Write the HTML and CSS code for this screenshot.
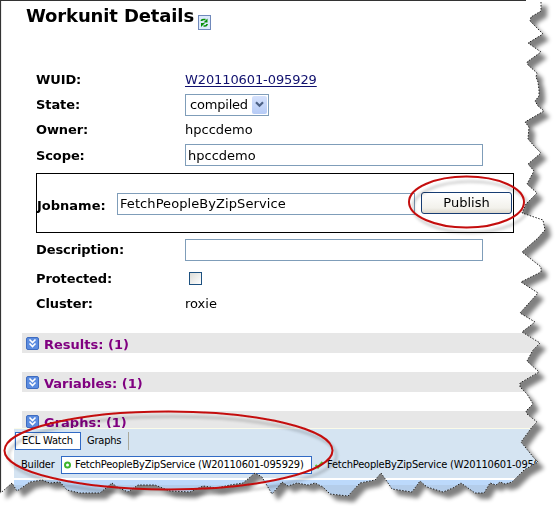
FILE: index.html
```
<!DOCTYPE html>
<html lang="en">
<head>
<meta charset="utf-8">
<title>Workunit Details</title>
<link rel="stylesheet" href="styles.css">
</head>
<body>
<div class="shadow">
<main class="sheet">
  <header class="title"><h1>Workunit Details</h1>
    <svg class="refresh" width="13" height="15" viewBox="0 0 13 15"><rect x=".5" y=".5" width="12" height="14" fill="#dce9fc" stroke="#7089bb"/><path d="M3.500 6V5.500Q4 4.500 6 4.500H7.500M9 9V9.500Q8.500 11 7 11H5.500" fill="none" stroke="#079007" stroke-width="1.700"/><path d="M9.500 3.500v4H5.500zM3 12V8H7z" fill="#079007"/></svg>
  </header>
  <section class="details">
    <div class="row wuid"><b>WUID:</b><a>W20110601-095929</a></div>
    <div class="row state"><b>State:</b><span class="select"><span>compiled</span><i><svg width="9" height="7" viewBox="0 0 9 7"><path d="M1 1.300L4.500 4.800L8 1.300" fill="none" stroke="#4d6185" stroke-width="2.200"/></svg></i></span></div>
    <div class="row owner"><b>Owner:</b><span>hpccdemo</span></div>
    <div class="row scope"><b>Scope:</b><span class="field">hpccdemo</span></div>
    <div class="job"><b>Jobname:</b><span class="field">FetchPeopleByZipService</span><span class="button">Publish</span></div>
    <div class="row description"><b>Description:</b><span class="field"></span></div>
    <div class="row protected"><b>Protected:</b><span class="check"></span></div>
    <div class="row cluster"><b>Cluster:</b><span>roxie</span></div>
  </section>
  <section class="groups">
    <h2><svg width="13" height="13" viewBox="0 0 13 13"><rect x=".5" y=".5" width="12" height="12" rx="1.500" fill="#5b8ce0" stroke="#3f6cc0"/><path d="M3.500 2.500l3 3l3-3M3.500 6.500l3 3l3-3" fill="none" stroke="#fff" stroke-width="1.600"/></svg>Results: (1)</h2>
    <h2><svg width="13" height="13" viewBox="0 0 13 13"><rect x=".5" y=".5" width="12" height="12" rx="1.500" fill="#5b8ce0" stroke="#3f6cc0"/><path d="M3.500 2.500l3 3l3-3M3.500 6.500l3 3l3-3" fill="none" stroke="#fff" stroke-width="1.600"/></svg>Variables: (1)</h2>
    <h2 class="cut"><svg width="13" height="13" viewBox="0 0 13 13"><rect x=".5" y=".5" width="12" height="12" rx="1.500" fill="#5b8ce0" stroke="#3f6cc0"/><path d="M3.500 2.500l3 3l3-3M3.500 6.500l3 3l3-3" fill="none" stroke="#fff" stroke-width="1.600"/></svg>Graphs: (1)</h2>
  </section>
  <footer class="panel">
    <div class="tabs"><span class="tab active">ECL Watch</span><span class="tab">Graphs</span></div>
    <div class="builders"><span class="label">Builder</span>
      <span class="item active"><svg width="7" height="8" viewBox="0 0 7 8"><circle cx="3.500" cy="4" r="2.500" fill="#fff" stroke="#3eb52c" stroke-width="2"/></svg><span class="name">FetchPeopleByZipService (W20110601-095929)</span></span>
      <span class="item"><svg width="8" height="8" viewBox="0 0 8 8"><path d="M.5 4l2.500 2.500L7.500 1" fill="none" stroke="#55c832" stroke-width="2.200"/></svg><span class="name">FetchPeopleByZipService (W20110601-095929)</span></span>
    </div>
    <div class="strip"><span></span><span></span></div>
  </footer>
</main>
</div>
<svg class="overlay" width="557" height="506" viewBox="0 0 557 506">
  <defs><filter id="soft" x="-10%" y="-20%" width="130%" height="150%"><feDropShadow dx="4" dy="5" stdDeviation="1.500" flood-color="#000" flood-opacity=".24"/></filter></defs>
  <path d="M.5 492V.5H526" fill="none" stroke="#333" stroke-width="1.200"/>
  <path id="edge" fill="none" stroke="#222" stroke-width="1" stroke-dasharray="1.500 1.500"/>
  <g fill="none" stroke="#c40d0d" stroke-width="2"><ellipse cx="466.500" cy="202" rx="57.500" ry="25.500" filter="url(#soft)"/><ellipse cx="168.500" cy="450.500" rx="164" ry="39" filter="url(#soft)"/></g>
</svg>
<script src="edge.js"></script>
</body>
</html>
```
FILE: styles.css
```
* { box-sizing: border-box; }
body { margin: 0; width: 557px; height: 506px; overflow: hidden; background: #fff; color: #000; font: 13px/16px "DejaVu Sans", sans-serif; position: relative; }
.shadow { filter: drop-shadow(6px 6px 2px #808080); }
.sheet { width: 557px; height: 506px; background: #fff; overflow: hidden; display: flex; flex-direction: column; }
.overlay { position: absolute; left: 0; top: 0; }
.title { height: 68px; flex: none; padding: 4px 0 0 26px; display: flex; align-items: flex-start; gap: 4px; }
h1 { margin: 0; font-size: 18px; line-height: 24px; width: 168px; white-space: nowrap; letter-spacing: -.13px; }
.refresh { margin-top: 11px; }
.details { height: 265px; flex: none; padding-left: 36px; }
.row { display: flex; align-items: center; height: 25px; }
.row > b { width: 149px; letter-spacing: -.1px; }
.wuid { height: 24px; }
a { color: #10106e; text-decoration: underline; text-underline-offset: 2px; letter-spacing: -.1px; }
.select { width: 84px; height: 22px; border: 1px solid #7f9db9; padding: 1px; display: flex; justify-content: space-between; align-items: center; }
.select > span { padding-left: 3px; letter-spacing: -.2px; }
.select i { width: 15px; height: 18px; border-radius: 2px; background: linear-gradient(#d5e1fc, #b6cbf6); display: grid; place-items: center; }
.field { width: 298px; height: 22px; border: 1px solid #7f9db9; padding: 3px 2px 1px; white-space: nowrap; }
.scope { height: 26px; }
.scope b { padding-top: 1px; }
.job { margin-top: 5px; width: 478px; height: 60px; border: 1px solid #000; display: flex; align-items: center; padding-top: 1px; }
.job b { width: 80px; padding-top: 4px; }
.job .field { padding-top: 2px; letter-spacing: .08px; }
.button { width: 91px; height: 22px; margin: -2px 0 0 6px; border: 1px solid #173d73; border-radius: 3px; background: linear-gradient(#fff, #f2f1eb 75%, #dcd8cd); text-align: center; line-height: 19px; }
.description { margin-top: 4px; }
.protected { height: 29px; margin-top: 2px; }
.check { width: 13px; height: 13px; border: 1px solid #1d5180; background: linear-gradient(135deg, #dcdcd7, #fff); margin-left: 4px; }
.cluster { height: 22px; }
.groups { height: 95px; flex: none; padding-left: 22px; overflow: hidden; display: flex; flex-direction: column; gap: 19px; }
h2 { margin: 0; height: 20px; flex: none; background: #e7e7e7; color: #800080; font-size: 13px; line-height: 23px; padding-left: 4px; display: flex; gap: 5px; }
h2 svg { margin-top: 4px; }
.panel { margin-left: 14px; height: 78px; background: #d5e4f2; border-top: 1px solid #fbfbe9; font: 11px/14px "DejaVu Sans Condensed", "DejaVu Sans", sans-serif; letter-spacing: -.2px; }
.tabs { display: flex; height: 27px; padding: 3px 0 0 1px; }
.tab { height: 18px; border-right: 1px solid #aaa99c; padding: 2px 7px 0 6px; width: 48px; white-space: nowrap; }
.tab.active { width: 66px; border: 1px solid #316ac5; background: #fff; padding-top: 1px; }
.builders { display: flex; padding-left: 7px; height: 22px; align-items: flex-start; white-space: nowrap; }
.label { width: 40px; flex: none; padding-top: 2px; }
.item { display: flex; height: 18px; align-items: center; flex: none; gap: 4px; padding-left: 3px; }
.item svg { flex: none; }
.item.active { width: 251px; border: 1px solid #316ac5; background: #fff; padding-left: 2px; }
.strip { height: 28px; border-top: 2px solid #fff; background: #bcd9fb; padding-top: 5px; display: flex; gap: 6px; }
.strip span { width: 457px; background: #b4cdea; }
```
FILE: edge.js
```
// One outline serves both the torn sheet and its dotted border.
const tear = "541,2 541,11 531,17 530,21 534,25 543,34 528,43 541,52 527,62 528,65 537,73 536,77 538,82 539,90 539,96 535,101 538,106 544,111 525,122 529,127 528,139 535,147 541,153 528,164 534,171 527,184 537,193 526,204 522,213 543,220 545,230 538,238 522,252 541,267 541,272 521,282 538,293 520,313 535,322 522,332 540,343 533,350 527,361 539,372 520,383 520,387 527,394 533,404 526,411 527,414 537,422 532,427 521,442 534,458 538,462 524,470 512,482 505,484 500,482 496,485 490,483 484,493 475,493 461,483 453,488 443,492 427,487 420,481 412,492 392,489 386,480 381,473 375,480 360,483 348,496 330,494 323,487 315,483 308,485 297,483 288,486 282,482 278,487 272,494 262,477 255,473 243,483 230,485 217,488 203,486 190,492 170,491 155,485 138,485 128,492 117,487 112,483 100,493 80,493 67,490 60,482 50,483 42,480 30,482 23,487 17,491 12,483 3,491 0,493";
const points = tear.split(" ").map(pair => pair.split(",").map(Number));
document.querySelector(".sheet").style.clipPath = "polygon(0 0, 541px 0, " + points.map(([x, y]) => x + "px " + y + "px").join(",") + ")";
document.getElementById("edge").setAttribute("d", "M" + tear.replaceAll(" ", "L"));
```
